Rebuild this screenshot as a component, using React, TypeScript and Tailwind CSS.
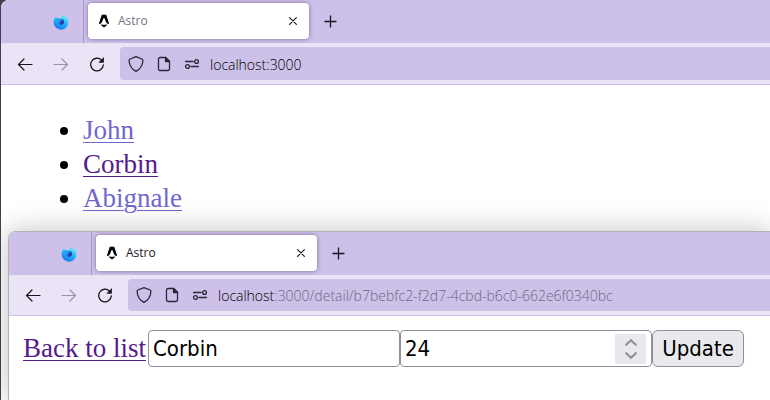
import type { ReactNode } from 'react';

const uiFont = "font-['Open_Sans','Noto_Sans',sans-serif]";
const formFont = "font-['DejaVu_Sans_Condensed','DejaVu_Sans',sans-serif]";

function FirefoxIcon() {
  return (
    <svg width="16" height="16" viewBox="0 0 16 16" aria-hidden="true">
      <defs>
        <linearGradient id="flame" x1="0.8" y1="0" x2="0.3" y2="1">
          <stop offset="0" stopColor="#6ff5f5" />
          <stop offset="0.5" stopColor="#22b8fa" />
          <stop offset="1" stopColor="#1670ee" />
        </linearGradient>
      </defs>
      <path
        d="M10.2.4c.2 1.2.9 2 1.8 2.9.3-.2.4-.5.4-.9 1.9 1.4 3 3.5 3 5.8a7.4 7.4 0 0 1-14.8.2C.6 6.300 1.200 4.300 2.600 2.700c.1.5.2.9.5 1.200.8-.1 1.500 0 2.200.200C6.500 3.900 7.500 3.900 8.600 4.100 8.500 2.600 9.100 1.200 10.200.4z"
        fill="url(#flame)"
      />
      <circle cx="8.300" cy="8" r="2.800" fill="#2b3fa6" />
      <path d="M2.600 5.200c1.600-1.100 3.200-.7 4.500.3.8.1 1.600.1 2.100.6-.4.8-1.200.9-2.100 1.200-.6.8-.2 1.400.5 1.800-2.200.3-3-1.400-5-3.900z" fill="#1fa2f5" />
    </svg>
  );
}

function AstroIcon() {
  return (
    <svg width="12" height="14" viewBox="0 0 12 14" aria-hidden="true">
      <path d="M3.800.8h4.400L11.300 10.200c-.8-.4-1.700-.7-2.700-.9L6.300 4h-.6L3.400 9.300c-1 .2-1.900.5-2.700.9z" fill="#000" />
      <path d="M3.100 10.200c1.700.7 4.100.7 5.800 0 .1 1-.6 1.700-1.400 2L6 13.600l-1.500-1.400C3.600 11.900 3 11.200 3.100 10.200z" fill="#000" />
    </svg>
  );
}

function BackIcon() {
  return (
    <svg width="16" height="16" viewBox="0 0 16 16" fill="none" stroke="currentColor" strokeWidth="1.200" strokeLinecap="round" strokeLinejoin="round" aria-hidden="true">
      <path d="M15 8.500H1.500M7 3 1.500 8.500 7 14" />
    </svg>
  );
}

function ForwardIcon() {
  return (
    <svg width="16" height="16" viewBox="0 0 16 16" fill="none" stroke="currentColor" strokeWidth="1.200" strokeLinecap="round" strokeLinejoin="round" aria-hidden="true">
      <path d="M1 8.500h13.500M9 3l5.500 5.500L9 14" />
    </svg>
  );
}

function ReloadIcon() {
  return (
    <svg width="16" height="16" viewBox="0 0 16 16" fill="none" stroke="currentColor" strokeWidth="1.300" strokeLinecap="round" aria-hidden="true">
      <path d="M12.500 4.100A6.300 6.300 0 1 0 14.300 9" />
      <path d="M14.700 1.700v4.700H10z" fill="currentColor" stroke="none" />
      <path d="M14.500 2v4.200h-4.200z" strokeWidth="0.6" strokeLinejoin="round" />
    </svg>
  );
}

function ShieldIcon() {
  return (
    <svg width="16" height="18" viewBox="0 0 16 18" fill="none" stroke="currentColor" strokeWidth="1.300" strokeLinejoin="round" aria-hidden="true">
      <path d="M8 1.600 14 4c.9.400 1 .9.900 1.700C14.600 10 12.500 14 8 16.400 3.500 14 1.400 10 1.100 5.700 1 4.900 1.100 4.400 2 4z" />
    </svg>
  );
}

function PageIcon() {
  return (
    <svg width="14" height="16" viewBox="0 0 14 16" fill="none" stroke="currentColor" strokeWidth="1.300" strokeLinejoin="round" aria-hidden="true">
      <path d="M3 1.500h5.700l3.800 3.800V13A1.500 1.500 0 0 1 11 14.500H3A1.500 1.500 0 0 1 1.500 13V3A1.500 1.500 0 0 1 3 1.500z" />
      <path d="M8.500 1.500v4h4z" fill="currentColor" />
    </svg>
  );
}

function PermissionsIcon() {
  return (
    <svg width="16" height="12" viewBox="0 0 16 12" fill="none" stroke="currentColor" strokeWidth="1.300" strokeLinecap="round" aria-hidden="true">
      <path d="M1.500 3.500h7.500M7 8.500h7.500" />
      <circle cx="12.500" cy="3.500" r="1.900" />
      <circle cx="3.500" cy="8.500" r="1.900" />
    </svg>
  );
}

function CloseIcon() {
  return (
    <svg width="8" height="8" viewBox="0 0 8 8" stroke="currentColor" strokeWidth="1.100" strokeLinecap="round" aria-hidden="true">
      <path d="m.6.6 6.800 6.800M7.400.6.600 7.400" />
    </svg>
  );
}

function PlusIcon() {
  return (
    <svg width="13" height="13" viewBox="0 0 13 13" stroke="currentColor" strokeWidth="1.300" strokeLinecap="round" aria-hidden="true">
      <path d="M6.500 1v11M1 6.500h11" />
    </svg>
  );
}

type BrowserProps = {
  titleClass: string;
  toolbarClass: string;
  host: string;
  path: string;
  pathClass: string;
  children: ReactNode;
};

function Browser({ titleClass, toolbarClass, host, path, pathClass, children }: BrowserProps) {
  return (
    <>
      <header className={`${uiFont} text-[#15141a]`}>
        <div className="flex h-[43px] bg-[#cdc1e9]">
          <button type="button" aria-label="Firefox View" className="flex w-[83px] items-center justify-end border-r border-[#a397c2] pr-3.5">
            <FirefoxIcon />
          </button>
          <div className="my-[3px] ml-1 flex h-9 w-[221px] items-center rounded bg-white pr-3 pl-2.5 shadow-[0_0_4px_rgba(70,50,110,0.6)]">
            <AstroIcon />
            <span className={`ml-2 flex-1 text-xs ${titleClass}`}>Astro</span>
            <button type="button" aria-label="Close tab">
              <CloseIcon />
            </button>
          </div>
          <button type="button" aria-label="New tab" className="ml-[15px]">
            <PlusIcon />
          </button>
        </div>
        <div className={`flex border-b border-[#cdc1e9] bg-[#ebe4f7] py-1 pl-4 ${toolbarClass}`}>
          <div className="flex w-[103px] items-center gap-5">
            <button type="button" aria-label="Back">
              <BackIcon />
            </button>
            <button type="button" aria-label="Forward" disabled className="text-[#9a92a8]">
              <ForwardIcon />
            </button>
            <button type="button" aria-label="Reload">
              <ReloadIcon />
            </button>
          </div>
          <div className="flex min-w-0 flex-1 items-center rounded-l bg-[#cdc1e9] pl-2 text-[#2b2636]">
            <ShieldIcon />
            <span className="ml-[13px]">
              <PageIcon />
            </span>
            <span className="ml-[13px]">
              <PermissionsIcon />
            </span>
            <span className="ml-2.5 pt-0.5 text-sm font-light whitespace-nowrap text-black">
              {host}
              <span className={pathClass}>{path}</span>
            </span>
          </div>
        </div>
      </header>
      {children}
    </>
  );
}

const people = [
  { name: 'John', color: 'text-[#6f68cf]' },
  { name: 'Corbin', color: 'text-[#551a8b]' },
  { name: 'Abignale', color: 'text-[#6f68cf]' },
];

export default function App() {
  return (
    <div className="relative min-h-screen overflow-hidden bg-[#42404c] pl-px">
      <section className="min-h-screen overflow-hidden rounded-tl-lg bg-white">
        <Browser titleClass="text-[#77727f]" toolbarClass="h-[42px]" host="localhost" path=":3000" pathClass="text-black">
          <ul className="list-disc pt-7 pl-[82px] font-['Liberation_Serif',serif] text-[27px] leading-[34px] text-black">
            {people.map((p) => (
              <li key={p.name}>
                <a href="#detail" className={`underline decoration-1 underline-offset-3 ${p.color}`}>
                  {p.name}
                </a>
              </li>
            ))}
          </ul>
        </Browser>
      </section>

      <section className="absolute top-[231px] right-0 bottom-0 left-2 overflow-hidden rounded-tl-lg border-t border-l border-[#b3b1b7] bg-white shadow-[0_0_28px_rgba(0,0,0,0.25)]">
        <Browser titleClass="text-[#15141a]" toolbarClass="h-[41px]" host="localhost" path=":3000/detail/b7bebfc2-f2d7-4cbd-b6c0-662e6f0340bc" pathClass="text-[#6f687d]">
          <form className={`flex items-start pt-3.5 pl-3.5 text-[22px] text-black ${formFont}`} onSubmit={(e) => e.preventDefault()}>
            <a href="#list" className="w-[125px] font-['Liberation_Serif',serif] text-[27px] leading-9 whitespace-nowrap text-[#551a8b] underline decoration-1 underline-offset-3">
              Back to list
            </a>
            <input aria-label="Name" defaultValue="Corbin" className="h-[37px] w-[252px] rounded border border-[#8f8f9d] bg-white px-1" />
            <div className="flex h-[37px] w-[252px] items-center rounded border border-[#8f8f9d] bg-white pr-[5px]">
              <input aria-label="Age" inputMode="numeric" defaultValue="24" className="min-w-0 flex-1 px-1 outline-none" />
              <div className="flex h-[30px] w-[31px] flex-col items-center justify-center gap-1.5 bg-[#e9e9ed] text-[#8f8f9d]">
                <button type="button" aria-label="Increase">
                  <svg className="block" width="12" height="7" viewBox="0 0 12 7" fill="none" stroke="currentColor" strokeWidth="2.200" strokeLinecap="round" strokeLinejoin="round">
                    <path d="m1.200 5.800L6 1.200l4.800 4.600" />
                  </svg>
                </button>
                <button type="button" aria-label="Decrease">
                  <svg className="block" width="12" height="7" viewBox="0 0 12 7" fill="none" stroke="currentColor" strokeWidth="2.200" strokeLinecap="round" strokeLinejoin="round">
                    <path d="m1.200 1.200L6 5.800l4.800-4.600" />
                  </svg>
                </button>
              </div>
            </div>
            <button type="submit" className="flex h-[37px] w-[92px] items-center justify-center rounded-md border border-[#8f8f9d] bg-[#e9e9ed]">
              Update
            </button>
          </form>
        </Browser>
      </section>
    </div>
  );
}
